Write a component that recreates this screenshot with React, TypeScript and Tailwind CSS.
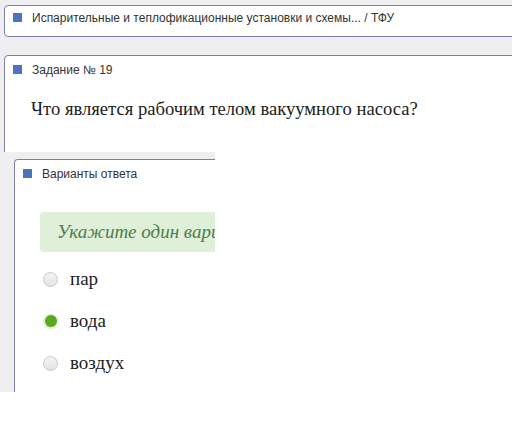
const Marker = () => <span className="block w-[9px] h-[9px] bg-[#4a73c2] shrink-0" />;

const options = [
  { label: "пар", checked: false },
  { label: "вода", checked: true },
  { label: "воздух", checked: false },
];

const Radio = ({ checked }: { checked: boolean }) =>
  checked ? (
    <span className="w-[15px] h-[15px] rounded-full bg-[#dff0d0] flex items-center justify-center shrink-0">
      <span className="w-[12px] h-[12px] rounded-full bg-[#5aa820]" />
    </span>
  ) : (
    <span className="w-[15px] h-[15px] rounded-full border border-[#c9c9c9] bg-gradient-to-b from-[#f4f4f4] to-[#e4e4e4] shrink-0" />
  );

export default function App() {
  return (
    <div className="w-[512px] h-[437px] bg-white overflow-hidden font-['Liberation_Sans',Arial,sans-serif]">
      {/* page header + task card */}
      <div className="h-[152px] bg-[#efeff1] pt-[5px] pl-[4px] overflow-hidden">
        <div className="h-[32px] -mr-4 bg-white border border-[#7c80a8] rounded-[4px] flex items-start pt-[7px] pl-[8px] gap-[10px]">
          <Marker />
          <span className="text-[12px] leading-[10px] text-[#333]">
            Испарительные и теплофикационные установки и схемы... / ТФУ
          </span>
        </div>
        <div className="mt-[18px] h-[140px] -mr-4 bg-white border border-[#7c80a8] rounded-[4px] pt-[9px] pl-[8px]">
          <div className="flex items-start gap-[10px]">
            <Marker />
            <span className="text-[12px] leading-[10px] text-[#333]">Задание № 19</span>
          </div>
          <p className="mt-[23px] pl-[18px] font-['Liberation_Serif','Times_New_Roman',serif] text-[18.6px] leading-[22px] text-[#222]">
            Что является рабочим телом вакуумного насоса?
          </p>
        </div>
      </div>

      {/* answers card */}
      <div className="w-[215px] h-[240px] bg-[#efeff1] pt-[7px] pl-[14px] overflow-hidden">
        <div className="h-[260px] w-[260px] bg-white border-l border-t border-[#7c80a8] rounded-tl-[4px] pt-[9px] pl-[8px]">
          <div className="flex items-start gap-[10px]">
            <Marker />
            <span className="text-[12px] leading-[10px] text-[#333]">Варианты ответа</span>
          </div>
          <div className="mt-[33px] ml-[17px] h-[40px] w-[240px] bg-[#dff0d8] rounded-[4px] flex items-center pl-[17px]">
            <span className="font-['Liberation_Serif','Times_New_Roman',serif] italic text-[19px] text-[#4e7c4e] whitespace-nowrap">
              Укажите один вариант ответа
            </span>
          </div>
          <div className="mt-[18px] ml-[20px] flex flex-col gap-[24px]">
            {options.map((o) => (
              <label key={o.label} className="flex items-center gap-[12px] h-[18px]">
                <Radio checked={o.checked} />
                <span className="font-['Liberation_Serif','Times_New_Roman',serif] text-[19px] leading-[18px] text-[#222]">
                  {o.label}
                </span>
              </label>
            ))}
          </div>
        </div>
      </div>
    </div>
  );
}
